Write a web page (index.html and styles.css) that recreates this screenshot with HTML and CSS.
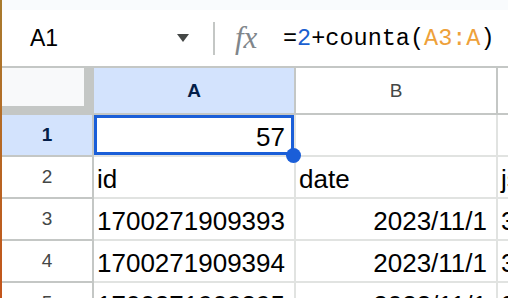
FILE: index.html
```html
<!DOCTYPE html>
<html lang="en">
<head>
  <meta charset="UTF-8">
  <meta name="viewport" content="width=device-width, initial-scale=1.0">
  <title>Sheet</title>
  <link rel="stylesheet" href="styles.css">
</head>
<body>

  <!-- Window edge -->
  <div class="edge"></div>

  <div class="app">
    <div class="top-strip"></div>

    <!-- Formula bar -->
    <div class="formula-bar">
      <div class="name-box">
        <span class="cell-ref">A1</span>
        <span class="caret"></span>
      </div>
      <div class="divider"></div>
      <span class="fx">fx</span>
      <div class="formula">=<span class="f-num">2</span>+counta(<span class="f-ref">A3:A</span>)</div>
    </div>

    <!-- Grid -->
    <div class="sheet">
      <div class="corner"><div class="corner-box"></div></div>
      <div class="col-head active">A</div>
      <div class="col-head">B</div>
      <div class="col-head"></div>

      <div class="row-head active">1</div>
      <div class="cell num selected">57<span class="selection"></span><span class="handle"></span></div>
      <div class="cell"></div>
      <div class="cell"></div>

      <div class="row-head">2</div>
      <div class="cell">id</div>
      <div class="cell">date</div>
      <div class="cell">json</div>

      <div class="row-head">3</div>
      <div class="cell">1700271909393</div>
      <div class="cell num">2023/11/1</div>
      <div class="cell">3</div>

      <div class="row-head">4</div>
      <div class="cell">1700271909394</div>
      <div class="cell num">2023/11/1</div>
      <div class="cell">3</div>

      <div class="row-head">5</div>
      <div class="cell">1700271909395</div>
      <div class="cell num">2023/11/1</div>
      <div class="cell">3</div>
    </div>
  </div>

</body>
</html>
```

FILE: styles.css
```css
/* Page */
body {
  margin: 0;
  height: 100vh;
  display: flex;
  overflow: hidden;
  background: #fff;
  font-family: "Liberation Sans", Arial, sans-serif;
  color: #000;
}

.edge {
  flex: none;
  width: 2px;
  background: linear-gradient(#a97b2e, #c3551b);
}

.app {
  flex: 1;
  min-width: 0;
  overflow: hidden;
}

.top-strip {
  height: 10px;
  background: #f9fbfd;
}

/* Formula bar */
.formula-bar {
  height: 56px;
  border-bottom: 2px solid #c4c7c5;
  display: flex;
  align-items: center;
  padding-left: 28px;
}

.name-box {
  width: 159px;
  display: flex;
  align-items: center;
  justify-content: space-between;
  margin-right: 24px;
}

.cell-ref {
  font-size: 23px;
}

.caret {
  width: 0;
  height: 0;
  border-left: 6.5px solid transparent;
  border-right: 6.5px solid transparent;
  border-top: 8px solid #444746;
}

.divider {
  width: 2px;
  height: 33px;
  background: #c4c7c5;
}

.fx {
  width: 48px;
  margin-left: 20px;
  font-family: "Liberation Serif", serif;
  font-style: italic;
  font-size: 31px;
  color: #80868b;
}

.formula {
  font-family: "Liberation Mono", monospace;
  font-size: 23.5px;
  white-space: nowrap;
}

.f-num {
  color: #1a5fd0;
}

.f-ref {
  color: #eea13a;
}

/* Grid */
.sheet {
  display: grid;
  grid-template-columns: 92px 202px 202px 1fr;
  grid-template-rows: 47px repeat(5, 42px);
}

.sheet > div {
  box-sizing: border-box;
}

.corner {
  background: #c4c7c5;
}

.corner-box {
  width: 82px;
  height: 38px;
  background: #f8f9fa;
}

.col-head,
.row-head {
  display: flex;
  align-items: center;
  justify-content: center;
  border-right: 2px solid #c4c7c5;
  border-bottom: 2px solid #c4c7c5;
  font-size: 19px;
  color: #444746;
}

.col-head.active,
.row-head.active {
  background: #d3e3fd;
  color: #041e49;
  font-weight: bold;
}

.cell {
  display: flex;
  align-items: flex-end;
  padding: 0 9px 5px 3px;
  border-right: 2px solid #e1e3e1;
  border-bottom: 2px solid #e1e3e1;
  font-size: 26px;
  line-height: 1;
  white-space: nowrap;
  overflow: hidden;
}

.cell.num {
  justify-content: flex-end;
}

/* Selected cell */
.selected {
  position: relative;
  overflow: visible;
}

.selection {
  position: absolute;
  inset: 0;
  border: 3px solid #1a5ed8;
}

.handle {
  position: absolute;
  right: -7px;
  bottom: -8px;
  width: 15px;
  height: 15px;
  border-radius: 50%;
  background: #1a5ed8;
  z-index: 2;
}
```
